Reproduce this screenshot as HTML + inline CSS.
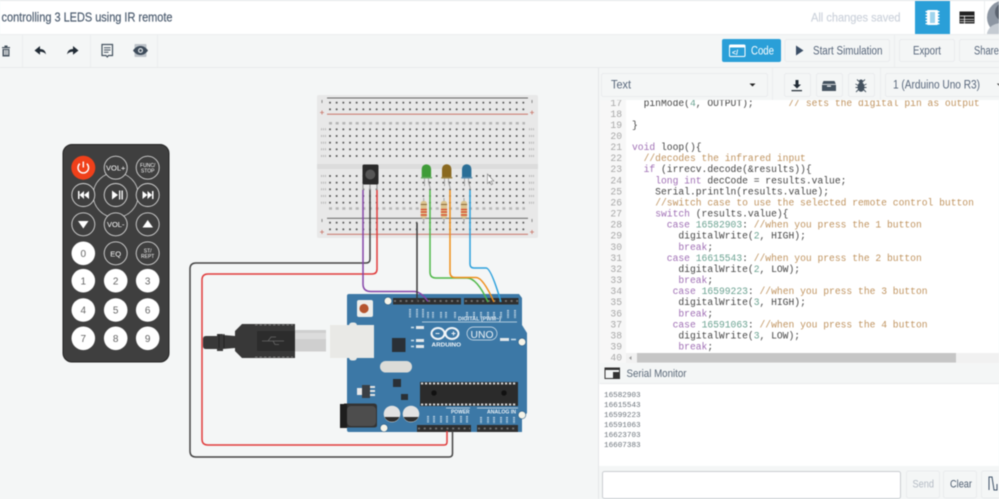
<!DOCTYPE html>
<html><head><meta charset="utf-8"><title>controlling 3 LEDS using IR remote</title>
<style>
html,body{margin:0;padding:0;width:999px;height:499px;overflow:hidden;background:#f4f6f6}
svg{display:block;filter:blur(.45px)}
text{font-family:"Liberation Sans",sans-serif;white-space:pre}
.c text,.c{font-family:"Liberation Mono",monospace;font-size:9.67px;fill:#454545}
.n{font-family:"Liberation Mono",monospace;font-size:9.67px;fill:#a8a8a8;text-anchor:end}
.k{fill:#a070b5}.m{fill:#c09460}.g{fill:#6ca392}
.u{font-size:11.5px;fill:#56657a}
.b{font-size:7.5px;fill:#fff;text-anchor:middle}
.w{fill:none;stroke-width:1.5}
.r{font-size:10px;fill:#666;text-anchor:middle}
</style></head><body>
<svg width="999" height="499" viewBox="0 0 999 499" xmlns="http://www.w3.org/2000/svg">
<defs>
<pattern id="h" width="6.667" height="6.667" patternUnits="userSpaceOnUse" patternTransform="translate(326.67 126)"><circle cx="3.33" cy="3.33" r=".95" fill="#444"/></pattern>
</defs>
<!-- base -->
<rect width="999" height="499" fill="#f4f6f6"/>
<rect width="999" height="34" fill="#fff"/><rect width="999" height="1" fill="#e6e8ea"/>
<rect y="34" width="999" height="1" fill="#eceeef"/>
<rect y="67" width="999" height="1" fill="#e8eaeb"/>
<text x="1.5" y="21.500" font-size="12.500" fill="#4d5d70" stroke="#4d5d70" stroke-width=".2" textLength="171" lengthAdjust="spacingAndGlyphs">controlling 3 LEDS using IR remote</text>
<text x="811" y="21.500" font-size="11.500" fill="#cdd3dc" stroke="#cdd3dc" stroke-width=".2" textLength="89.500" lengthAdjust="spacingAndGlyphs">All changes saved</text>
<rect x="915" y="1" width="35" height="33" fill="#2a9fd8"/>
<g fill="#fff"><rect x="927" y="10" width="11" height="15" rx="1"/><rect x="925.500" y="11" width="14" height="1.300"/><rect x="925.500" y="14" width="14" height="1.300"/><rect x="925.500" y="17" width="14" height="1.300"/><rect x="925.500" y="20" width="14" height="1.300"/><rect x="925.500" y="23" width="14" height="1.300"/></g>
<rect x="930" y="12" width="5" height="11" fill="#2a9fd8" opacity=".45"/>
<rect x="959.500" y="11.500" width="15" height="12" fill="#222"/><path d="M960 16h14M960 19.300h14M960 21.700h14M964.500 16v7.500" stroke="#fff" stroke-width=".7" fill="none"/>
<rect x="984" y="1" width="1" height="33" fill="#eceeef"/>
<circle cx="1004" cy="17.500" r="17" fill="#8d96a2"/><circle cx="1004" cy="12" r="9" fill="#5c6470"/><path d="M987 33c3-9 10-10 17-10v11h-17z" fill="#c5cbd2"/>
<!-- left toolbar -->
<g fill="#46525e"><path d="M2 47h8v1.200H2zM4.500 45.500h3V47h-3z"/><path d="M2.500 49h7v7.500h-7zM4 50v5h1v-5zM5.600 50v5h1v-5zM7.200 50v5h1v-5z" fill-rule="evenodd"/></g>
<rect x="22" y="35" width="1" height="32" fill="#eceeef"/>
<path d="M34.500 50.500l5.500-4.500v3c3.500 0 5.500 1.800 6 5.500-1.500-2-3.500-2.700-6-2.700v3z" fill="#222c36"/>
<path d="M78.500 50.500l-5.500-4.500v3c-3.500 0-5.500 1.800-6 5.500 1.500-2 3.500-2.700 6-2.700v3z" fill="#222c36"/>
<rect x="90" y="35" width="1" height="32" fill="#eceeef"/>
<path d="M102 44.500h10.500v11h-4l-1.200 1.500-1.300-1.500h-4z" fill="none" stroke="#44525f" stroke-width="1.200"/><path d="M104 47.800h6.500M104 50h6.500M104 52.300h4.500" stroke="#44525f" stroke-width="1"/>
<rect x="134.500" y="44" width="12" height="13" rx="1" fill="#bcc2c8"/>
<path d="M133 50.500c2.500-3.500 5-4.500 7.500-4.500s5 1 7.500 4.500c-2.500 3.500-5 4.500-7.500 4.500s-5-1-7.500-4.500z" fill="#3d4b5a"/><circle cx="140.500" cy="50.500" r="2.500" fill="#dfe3e6"/><circle cx="140.500" cy="50.500" r="1.300" fill="#3d4b5a"/>
<rect x="157" y="35" width="1" height="32" fill="#eceeef"/>
<!-- right toolbar -->
<rect x="722" y="39" width="59" height="23" rx="2" fill="#2a9fd8"/>
<rect x="729.500" y="45" width="15.500" height="11.500" rx="1" fill="none" stroke="#fff" stroke-width="1"/><rect x="729.500" y="45" width="15.500" height="2.500" fill="#fff"/><text x="732" y="55" font-size="7" fill="#fff" font-weight="bold">&lt;/</text>
<text x="751" y="54.500" font-size="11.500" fill="#fff" textLength="23" lengthAdjust="spacingAndGlyphs">Code</text>
<rect x="785" y="39.500" width="104.500" height="22" rx="2" fill="#f4f6f6" stroke="#e9ebed"/>
<path d="M796 45.500l7.500 5-7.500 5z" fill="#3b4e66"/>
<text x="813" y="54.500" class="u" textLength="69.500" lengthAdjust="spacingAndGlyphs">Start Simulation</text>
<rect x="894" y="35" width="1" height="32" fill="#eceeef"/>
<rect x="899.500" y="39.500" width="55" height="22" rx="2" fill="#f4f6f6" stroke="#e9ebed"/>
<text x="913" y="54.500" class="u" textLength="28" lengthAdjust="spacingAndGlyphs">Export</text>
<rect x="959.500" y="39.500" width="50" height="22" rx="2" fill="#f4f6f6" stroke="#e9ebed"/>
<text x="974" y="54.500" class="u" textLength="25" lengthAdjust="spacingAndGlyphs">Share</text>
<!-- breadboard -->
<rect x="317" y="95" width="221" height="143" rx="2" fill="#e8e8e8"/>
<rect x="317" y="164" width="221" height="5" fill="#dcdcdc"/>
<rect x="327" y="97.500" width="201" height="1" fill="#666"/><rect x="327" y="113.700" width="201" height="1" fill="#c87468"/>
<rect x="327" y="217.800" width="201" height="1" fill="#666"/><rect x="327" y="233.800" width="201" height="1" fill="#c87468"/>
<rect x="326.670" y="99.330" width="200" height="13.340" fill="url(#h)"/>
<rect x="326.670" y="126" width="200" height="33.340" fill="url(#h)"/>
<rect x="326.670" y="172.670" width="200" height="33.340" fill="url(#h)"/>
<rect x="326.670" y="219.330" width="200" height="13.340" fill="url(#h)"/>
<path d="M329 123.300h196M329 208.500h196" stroke="#b5b5b5" stroke-width="2.500" stroke-dasharray="3 3.670"/>
<path d="M321 129.300h5M321 136h5M321 142.700h5M321 149.300h5M321 156h5M529 129.300h5M529 136h5M529 142.700h5M529 149.300h5M529 156h5M321 176h5M321 182.700h5M321 189.300h5M321 196h5M321 202.700h5M529 176h5M529 182.700h5M529 189.300h5M529 196h5M529 202.700h5" stroke="#b8b8b8" stroke-width="2" stroke-dasharray="1 1"/>
<path d="M322 100v3M532 100v3M322 219v3M532 219v3" stroke="#888" stroke-width="1"/>
<path d="M320 112.500h4M322 110.500v4M530 112.500h4M532 110.500v4M320 232h4M322 230v4M530 232h4M532 230v4" stroke="#c87468" stroke-width=".8"/>
<!-- arduino board -->
<path d="M347 296q0-2 2-2h170l3 4v27l5 8v80l-5 6v13H349q-2 0-2-2z" fill="#3c78a6"/>
<g fill="#2f2f2f"><rect x="393" y="298" width="68" height="6.500"/><rect x="464" y="298" width="54.500" height="6.500"/><rect x="417" y="425" width="54" height="7"/><rect x="477" y="425" width="41" height="7"/></g>
<path d="M394 301h66M465 301h53M418 428.500h52M478 428.500h40" stroke="#777" stroke-width="1.800" stroke-dasharray="2 3.700"/>
<g fill="#f6f4e8" stroke="#2d5d84" stroke-width=".6"><circle cx="388" cy="301" r="3.800"/><circle cx="522" cy="342" r="3.800"/><circle cx="522" cy="415" r="3.800"/><circle cx="384" cy="428" r="3.800"/></g>
<rect x="357" y="300" width="16" height="17" rx="2" fill="#eeeeea"/><circle cx="364" cy="308.500" r="4.600" fill="#b5552f"/>
<rect x="392" y="338" width="13.500" height="14" fill="#2a3036"/>
<path d="M422 322h95" stroke="#d6e3ed" stroke-width=".7"/>
<text x="458" y="320.500" font-size="5.400" fill="#dfe9f1" font-weight="bold" textLength="43" lengthAdjust="spacingAndGlyphs">DIGITAL (PWM~)</text>
<path d="M410 309v9M417 309v9M423 309v9M428 312v6M433 312v6M441 312v6M446 312v6M455 312v6M467 312v6M474 312v6M481 312v6M488 312v6M494 312v6M501 312v6M508 310v8M515 310v8" stroke="#c9dbe8" stroke-width="2" stroke-dasharray="1 .8"/>
<g fill="#e4e8ea"><rect x="416" y="326" width="8" height="3"/><rect x="416" y="339" width="8" height="3"/><rect x="416" y="345" width="8" height="3"/><rect x="500" y="338" width="9" height="3"/></g>
<path d="M411 327.500h3M411 340.500h3M411 346.500h3M511 339.500h5" stroke="#cfe0ec" stroke-width="1.500"/>
<g fill="none" stroke="#f1f5f8" stroke-width="2"><ellipse cx="438" cy="333.500" rx="6.500" ry="5.500"/><ellipse cx="452" cy="333.500" rx="6.500" ry="5.500"/></g>
<path d="M435.500 333.500h4M451.500 333.500h4M453.500 331.500v4" stroke="#f1f5f8" stroke-width="1"/>
<text x="431.500" y="346.500" font-size="5.500" fill="#f1f5f8" font-weight="bold" textLength="29.500" lengthAdjust="spacingAndGlyphs">ARDUINO</text>
<rect x="467" y="327" width="30" height="13" rx="6.500" fill="none" stroke="#dfe9f1" stroke-width=".7"/>
<text x="470.500" y="338" font-size="10.500" fill="#eef3f7" textLength="23" lengthAdjust="spacingAndGlyphs">UNO</text>
<rect x="380" y="361" width="32" height="11.500" rx="5.700" fill="#dcdcd8"/>
<rect x="362" y="385" width="8" height="13" fill="#3a3f44"/><rect x="357" y="388" width="5" height="7" fill="#e8e8e8"/><path d="M370 387h5M370 391h5M370 395h5" stroke="#e4e4e4" stroke-width="2"/>
<rect x="393" y="379" width="8" height="8" fill="#2a3036"/>
<rect x="401" y="394" width="7" height="6" fill="#2a3036"/>
<rect x="420" y="382" width="98" height="24" fill="#2b2b2b"/>
<path d="M421 383.500h96M421 404.500h96" stroke="#d8d8d8" stroke-width="2" stroke-dasharray="2.200 1.800"/>
<circle cx="434" cy="393" r="2.700" fill="#111"/><circle cx="504" cy="393" r="2.700" fill="#111"/>
<circle cx="392" cy="414" r="8.300" fill="#e2e2e2"/><path d="M384.500 417a8.300 8.300 0 0 0 15 0z" fill="#2e2e2e"/>
<circle cx="411" cy="414" r="8.300" fill="#e2e2e2"/><path d="M403.500 417a8.300 8.300 0 0 0 15 0z" fill="#2e2e2e"/>
<path d="M446 408h24M477 408h41" stroke="#d6e3ed" stroke-width=".7"/>
<text x="451" y="413.500" font-size="5.200" fill="#e8eff5" font-weight="bold" textLength="18.500" lengthAdjust="spacingAndGlyphs">POWER</text>
<text x="487" y="413.500" font-size="5.200" fill="#e8eff5" font-weight="bold" textLength="29" lengthAdjust="spacingAndGlyphs">ANALOG IN</text>
<path d="M428 416v7M434 416v7M441 416v7M447 416v7M454 416v7M461 416v7M467 416v7M481 417v6M488 417v6M494 417v6M501 417v6M507 417v6M514 417v6" stroke="#c9dbe8" stroke-width="2" stroke-dasharray="1 .8"/>
<!-- power jack -->
<path d="M340 404h4v-.5h30q3 0 3 3v19q0 2-3 2H342q-2 0-2-2z" fill="#333"/><rect x="347" y="406" width="29" height="20" rx="4" fill="#4d4d4d"/><rect x="340" y="404" width="7" height="24" fill="#1e1e1e"/>
<!-- USB -->
<rect x="330" y="325" width="44" height="33" fill="#e9e9e6"/><rect x="349" y="322.500" width="8" height="38" rx="3" fill="#e9e9e6"/>
<rect x="295" y="330" width="31" height="21.500" fill="#cfcfcf"/><rect x="295" y="333" width="31" height="6" fill="#dcdcdc"/>
<path d="M203 339q0-3 3-3h11v-2h6v1l12 1v-5l7-7h53v34h-53l-7-7v-3l-12 1v2h-6v-2h-11q-3 0-3-3z" fill="#383838"/>
<rect x="257" y="331" width="38" height="20" fill="#2c2c2c"/>
<path d="M219 334v14M224 334v14" stroke="#222" stroke-width="1"/>
<path d="M255 325h38M255 357h38" stroke="#777" stroke-width="1" stroke-dasharray="2.500 2"/>
<path d="M262 341h22M268 341l3-4h5M273 341l2 3.500h4" fill="none" stroke="#666" stroke-width=".8"/>
<!-- wires -->
<g class="w">
<path d="M370 190V259q0 4-4 4H196q-6 0-6 6V451q0 6 6 6H449q3.500 0 3.500-3.500V431" stroke="#444"/>
<path d="M377 190V269q0 5-5 5H208q-6 0-6 6V439q0 6 6 6H444q3 0 3-3V431" stroke="#e03b3b"/>
<path d="M363 190V284q0 7.500 8 7.500H414q7 0 14 10" stroke="#8444a8"/>
<path d="M417 223V302" stroke="#3a3a3a"/>
<path d="M430 190V272q0 6 6 6H467q10 0 21 24" stroke="#4fb848"/>
<path d="M450 190V272q0 5.500 5 5.500H476q7 0 18 24.500" stroke="#ef8f1a"/>
<path d="M470 190V264q0 4 4 4H486q5 0 15 34" stroke="#2ba0dc"/>
</g>
<!-- IR sensor -->
<path d="M363 190V184M370 190V184M377 190V184" stroke="#9a9a9a" stroke-width="1.200"/>
<rect x="362.500" y="164.500" width="16" height="20" rx="1.500" fill="#2a2a2a"/><circle cx="370.300" cy="174.500" r="5" fill="#565656"/>
<!-- LEDs -->
<path d="M424.500 178v8M428.500 178v4l2 7M444.500 178v8M448.500 178v4l2 7M464.500 178v8M468.500 178v4l2 7" stroke="#a5a5a5" stroke-width="1"/>
<path d="M421.700 178v-9a4.700 4.700 0 0 1 9.400 0v9z" fill="#3f9c38"/><rect x="421" y="177" width="11" height="1.500" fill="#6aaa65"/>
<path d="M442 178v-9a4.700 4.700 0 0 1 9.400 0v9z" fill="#8a6920"/><rect x="441.300" y="177" width="11" height="1.500" fill="#9d8547"/>
<path d="M462 178v-9a4.700 4.700 0 0 1 9.400 0v9z" fill="#2b6f97"/><rect x="461.300" y="177" width="11" height="1.500" fill="#5a8cad"/>
<!-- resistors -->
<path d="M423.700 198v26M444 198v26M464 198v26" stroke="#aaa" stroke-width="1.200"/>
<rect x="420.700" y="201" width="6.200" height="17.500" rx="2.500" fill="#dcc48e"/><rect x="440.900" y="201" width="6.200" height="17.500" rx="2.500" fill="#dcc48e"/><rect x="460.900" y="201" width="6.200" height="17.500" rx="2.500" fill="#dcc48e"/>
<path d="M420.700 209.500h6.200M420.700 212h6.200M420.700 215h6.200M440.900 209.500h6.200M440.900 212h6.200M440.900 215h6.200M460.900 209.500h6.200M460.900 212h6.200M460.900 215h6.200" stroke="#d8452a" stroke-width="1.300"/>
<path d="M420.700 204.500h6.200M440.900 204.500h6.200M460.900 204.500h6.200" stroke="#8c6a3c" stroke-width="1"/>
<path d="M487.500 174v9.500l2.200-2 1.600 3.200 1.300-.7-1.600-3h2.800z" fill="#fff" stroke="#777" stroke-width=".6"/>
<!-- remote -->
<rect x="63" y="144.500" width="106" height="217.500" rx="9" fill="#3f3f3f" stroke="#222" stroke-width="1"/>
<circle cx="115.700" cy="195" r="22.500" fill="none" stroke="#c8c8c8" stroke-width=".8"/>
<g fill="#3f3f3f" stroke="#d5d5d5" stroke-width=".9">
<circle cx="115.700" cy="167.700" r="11.500"/><circle cx="147.700" cy="167.700" r="11.500"/>
<circle cx="83.300" cy="195" r="11.500"/><circle cx="115.700" cy="195" r="11.500"/><circle cx="147.700" cy="195" r="11.500"/>
<circle cx="83.300" cy="224.300" r="11.500"/><circle cx="115.700" cy="224.300" r="11.500"/><circle cx="147.700" cy="224.300" r="11.500"/>
<circle cx="115.700" cy="253.300" r="11.500"/><circle cx="147.700" cy="253.300" r="11.500"/>
</g>
<circle cx="83.300" cy="167.700" r="12" fill="#f0401a"/>
<path d="M79.800 163.700a5.300 5.300 0 1 0 7 0M83.300 161.500v6" fill="none" stroke="#fff" stroke-width="1.400"/>
<g fill="#fff"><circle cx="83.300" cy="253.300" r="11.800"/><circle cx="83.300" cy="280.700" r="11.800"/><circle cx="115.700" cy="280.700" r="11.800"/><circle cx="147.700" cy="280.700" r="11.800"/><circle cx="83.300" cy="310" r="11.800"/><circle cx="115.700" cy="310" r="11.800"/><circle cx="147.700" cy="310" r="11.800"/><circle cx="83.300" cy="338.300" r="11.800"/><circle cx="115.700" cy="338.300" r="11.800"/><circle cx="147.700" cy="338.300" r="11.800"/></g>
<text class="b" x="115.700" y="170.500">VOL+</text>
<text class="b" x="115.700" y="227">VOL-</text>
<text class="b" x="147.700" y="167" style="font-size:5px">FUNC/</text><text class="b" x="147.700" y="172.500" style="font-size:5px">STOP</text>
<text class="b" x="115.700" y="256.300">EQ</text>
<text class="b" x="147.700" y="252.500" style="font-size:5px">ST/</text><text class="b" x="147.700" y="258" style="font-size:5px">REPT</text>
<g fill="#fff">
<path d="M78 191v8h1.500v-8zM84 191l-4.500 4 4.500 4zM89 191l-5 4 5 4z"/>
<path d="M112 190.500l6 4.500-6 4.500zM119 190.500h1.300v9H119zM121.500 190.500h1.300v9h-1.300z"/>
<path d="M142.500 191l5 4-5 4zM147.500 191l4.500 4-4.500 4zM152 191h1.500v8H152z"/>
<path d="M78 221h10.500l-5.200 7.500z"/>
<path d="M142.500 227.500h10.500l-5.300-7.500z"/>
</g>
<text class="r" x="83.300" y="256.800">0</text><text class="r" x="83.300" y="284.300">1</text><text class="r" x="115.700" y="284.300">2</text><text class="r" x="147.700" y="284.300">3</text><text class="r" x="83.300" y="313.600">4</text><text class="r" x="115.700" y="313.600">5</text><text class="r" x="147.700" y="313.600">6</text><text class="r" x="83.300" y="341.900">7</text><text class="r" x="115.700" y="341.900">8</text><text class="r" x="147.700" y="341.900">9</text>
<!-- right panel -->
<rect x="599" y="68" width="400" height="431" fill="#f4f6f6"/>
<rect x="598" y="68" width="1" height="431" fill="#e4e6e8"/>
<rect x="601.500" y="73.500" width="166" height="23" rx="2" fill="#f4f6f6" stroke="#e9ebed"/>
<text x="611" y="88.500" class="u" textLength="20" lengthAdjust="spacingAndGlyphs">Text</text>
<path d="M749.500 83.500h6l-3 3z" fill="#222"/>
<rect x="772" y="68" width="1" height="32" fill="#eceeef"/><rect x="880" y="68" width="1" height="32" fill="#eceeef"/>
<rect x="784.500" y="73.500" width="26" height="23" rx="2" fill="#f4f6f6" stroke="#e9ebed"/>
<rect x="816.500" y="73.500" width="26" height="23" rx="2" fill="#f4f6f6" stroke="#e9ebed"/>
<rect x="848.500" y="73.500" width="26" height="23" rx="2" fill="#f4f6f6" stroke="#e9ebed"/>
<path d="M795.500 80h3v4.500h2.500l-4 4-4-4h2.500zM791.500 90h10.500v1.200h-10.500z" fill="#222c36"/>
<path d="M823.500 81h11l1.500 3.500v6.500h-14v-6.500z" fill="#44525f"/><rect x="827" y="85.500" width="4" height="1.200" fill="#f4f6f6"/><rect x="822" y="84" width="14" height=".8" fill="#f4f6f6"/>
<ellipse cx="861" cy="87" rx="3.500" ry="4.800" fill="#44525f"/><circle cx="861" cy="81.500" r="2" fill="#44525f"/><path d="M857 79.500l2 2M865 79.500l-2 2M855.500 84l3 1.500M866.500 84l-3 1.500M855.500 87.500h3M866.500 87.500h-3M856 92l2.500-2.500M866 92l-2.500-2.500" stroke="#44525f" stroke-width=".9"/>
<rect x="885.500" y="73.500" width="125" height="23" rx="2" fill="#f4f6f6" stroke="#e9ebed"/>
<text x="893" y="88.500" class="u" textLength="87" lengthAdjust="spacingAndGlyphs">1 (Arduino Uno R3)</text>
<path d="M997 83.500h4l-2 2.500z" fill="#333"/>
<!-- code area -->
<rect x="600" y="100" width="399" height="253" fill="#fff"/>
<rect x="600" y="100" width="26" height="263" fill="#f7f7f7"/>
<svg x="600" y="100" width="399" height="253" viewBox="600 100 399 253" style="filter:none">
<text class="n" x="622" y="106">17</text><text class="n" x="622" y="117">18</text><text class="n" x="622" y="128">19</text><text class="n" x="622" y="139">20</text><text class="n" x="622" y="150">21</text><text class="n" x="622" y="161">22</text><text class="n" x="622" y="172.200">23</text><text class="n" x="622" y="183.300">24</text><text class="n" x="622" y="194.400">25</text><text class="n" x="622" y="205.400">26</text><text class="n" x="622" y="216.500">27</text><text class="n" x="622" y="227.600">28</text><text class="n" x="622" y="238.700">29</text><text class="n" x="622" y="249.800">30</text><text class="n" x="622" y="260.900">31</text><text class="n" x="622" y="271.900">32</text><text class="n" x="622" y="283">33</text><text class="n" x="622" y="294.100">34</text><text class="n" x="622" y="305.200">35</text><text class="n" x="622" y="316.300">36</text><text class="n" x="622" y="327.400">37</text><text class="n" x="622" y="338.400">38</text><text class="n" x="622" y="349.500">39</text>
<g class="c">
<text x="632" y="106">  pinMode(<tspan class="g">4</tspan>, OUTPUT);      <tspan class="m">// sets the digital pin as output</tspan></text>
<text x="632" y="128">}</text>
<text x="632" y="150"><tspan class="k">void</tspan> loop(){</text>
<text x="632" y="161">  <tspan class="m">//decodes the infrared input</tspan></text>
<text x="632" y="172.200">  <tspan class="k">if</tspan> (irrecv.decode(&amp;results)){</text>
<text x="632" y="183.300">    <tspan class="k">long int</tspan> decCode = results.value;</text>
<text x="632" y="194.400">    Serial.println(results.value);</text>
<text x="632" y="205.400">    <tspan class="m">//switch case to use the selected remote control button</tspan></text>
<text x="632" y="216.500">    <tspan class="k">switch</tspan> (results.value){</text>
<text x="632" y="227.600">      <tspan class="k">case</tspan> <tspan class="g">16582903</tspan>: <tspan class="m">//when you press the 1 button</tspan></text>
<text x="632" y="238.700">        digitalWrite(<tspan class="g">2</tspan>, HIGH);</text>
<text x="632" y="249.800">        <tspan class="k">break</tspan>;</text>
<text x="632" y="260.900">      <tspan class="k">case</tspan> <tspan class="g">16615543</tspan>: <tspan class="m">//when you press the 2 button</tspan></text>
<text x="632" y="271.900">        digitalWrite(<tspan class="g">2</tspan>, LOW);</text>
<text x="632" y="283">        <tspan class="k">break</tspan>;</text>
<text x="632" y="294.100">       <tspan class="k">case</tspan> <tspan class="g">16599223</tspan>: <tspan class="m">//when you press the 3 button</tspan></text>
<text x="632" y="305.200">        digitalWrite(<tspan class="g">3</tspan>, HIGH);</text>
<text x="632" y="316.300">        <tspan class="k">break</tspan>;</text>
<text x="632" y="327.400">       <tspan class="k">case</tspan> <tspan class="g">16591063</tspan>: <tspan class="m">//when you press the 4 button</tspan></text>
<text x="632" y="338.400">        digitalWrite(<tspan class="g">3</tspan>, LOW);</text>
<text x="632" y="349.500">        <tspan class="k">break</tspan>;</text>
</g>
</svg>
<rect x="626" y="353" width="373" height="10" fill="#f1f1f1"/>
<text class="n" x="622" y="360.500">40</text>
<path d="M629 358l2.500-2v4z" fill="#999"/>
<rect x="637" y="353" width="319" height="9.500" fill="#c6c6c6"/>
<rect x="600" y="363" width="399" height="20" fill="#f4f6f6"/><rect x="600" y="383" width="399" height="1" fill="#e8eaeb"/>
<rect x="605" y="368" width="14.500" height="10.500" fill="none" stroke="#333" stroke-width="1"/><rect x="605" y="367.500" width="15" height="2.500" fill="#333"/><rect x="613" y="372" width="6.500" height="7" fill="#333"/>
<text x="626.500" y="377" font-size="11" fill="#5a6878" textLength="60" lengthAdjust="spacingAndGlyphs">Serial Monitor</text>
<rect x="599" y="384" width="400" height="82" fill="#fff"/>
<g font-size="7.640" fill="#6a727a">
<text x="604" y="397" style="font-family:'Liberation Mono',monospace">16582903</text>
<text x="604" y="407" style="font-family:'Liberation Mono',monospace">16615543</text>
<text x="604" y="417" style="font-family:'Liberation Mono',monospace">16599223</text>
<text x="604" y="427" style="font-family:'Liberation Mono',monospace">16591063</text>
<text x="604" y="437" style="font-family:'Liberation Mono',monospace">16623703</text>
<text x="604" y="447" style="font-family:'Liberation Mono',monospace">16607383</text>
</g>
<rect x="602.500" y="471.500" width="298" height="27" rx="2" fill="#fff" stroke="#c9cdd1"/>
<rect x="906.500" y="471" width="33" height="27" rx="2" fill="#f4f6f6" stroke="#e9ebed"/>
<text x="912.500" y="487.500" font-size="11" fill="#b4bbc4" textLength="21.500" lengthAdjust="spacingAndGlyphs">Send</text>
<rect x="943.500" y="471" width="33" height="27" rx="2" fill="#f4f6f6" stroke="#e9ebed"/>
<text x="950" y="487.500" font-size="11" fill="#4d5d70" textLength="22" lengthAdjust="spacingAndGlyphs">Clear</text>
<rect x="981.500" y="471" width="30" height="27" rx="2" fill="#f4f6f6" stroke="#e9ebed"/>
<path d="M989 490v-13h3l2 13h3v-6" fill="none" stroke="#3f5268" stroke-width="1"/>
</svg>
</body></html>
